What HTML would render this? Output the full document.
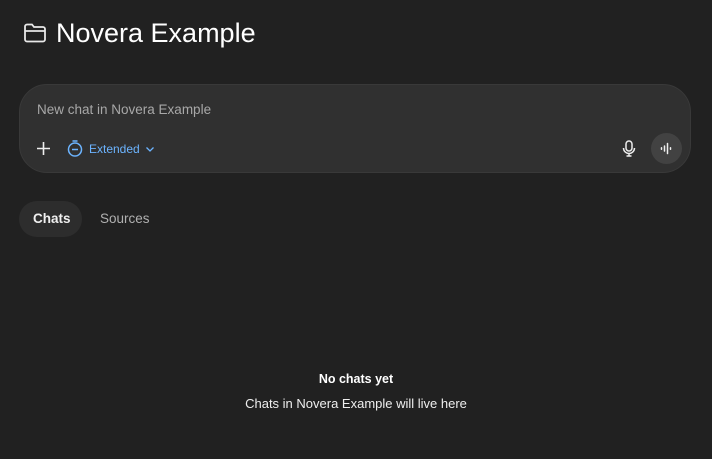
<!DOCTYPE html>
<html><head><style>
body{margin:0;width:712px;height:459px;background:#212121;font-family:"Liberation Sans",sans-serif;color:#fff;position:relative;overflow:hidden}
.a{position:absolute}
</style></head><body>
<svg class="a" style="left:23px;top:22px" width="24" height="22" viewBox="0 0 24 22" fill="none" stroke="#e8e8e8" stroke-width="1.8"><path d="M2 4.5a2 2 0 0 1 2-2h5l2 2.5h9a2 2 0 0 1 2 2v10.5a2 2 0 0 1-2 2H4a2 2 0 0 1-2-2z"/><path d="M2 9h20"/></svg>
<div class="a" style="left:56px;top:16px;font-size:27px;line-height:34px">Novera Example</div>
<div class="a" style="left:19px;top:84px;width:670px;height:87px;background:#303030;border:1px solid #393939;border-radius:28px"></div>
<div class="a" style="left:37px;top:102px;font-size:13.5px;color:#a8a8a8">New chat in Novera Example</div>
<svg class="a" style="left:36px;top:141px" width="15" height="15" stroke="#eee" stroke-width="1.6"><path d="M7.5 1v13M1 7.5h13"/></svg>
<svg class="a" style="left:66px;top:139px" width="18" height="19" viewBox="0 0 18 19" fill="none" stroke="#6cb4ff" stroke-width="1.5"><circle cx="9" cy="10.5" r="6.5"/><path d="M6.5 2h5M6 10.5h6"/></svg>
<div class="a" style="left:89px;top:142px;font-size:12px;color:#6cb4ff">Extended</div>
<svg class="a" style="left:145px;top:145px" width="10" height="8" fill="none" stroke="#6cb4ff" stroke-width="1.3"><path d="M1.5 2.5l3.5 3.5 3.5-3.5"/></svg>
<svg class="a" style="left:622px;top:140px" width="14" height="17" viewBox="0 0 14 17" fill="none" stroke="#eee" stroke-width="1.5"><rect x="4" y="1" width="6" height="10" rx="3"/><path d="M1.5 8a5.5 5.5 0 0 0 11 0M7 13.5v2.5M4.5 16h5"/></svg>
<div class="a" style="left:651px;top:133px;width:31px;height:31px;border-radius:50%;background:#424242"></div>
<svg class="a" style="left:659px;top:141px" width="15" height="15" stroke="#eee" stroke-width="1.5" stroke-linecap="round"><path d="M2.5 6.8v1.4M5.5 5v5M8.5 2.5v10M11.5 6.8v1.4"/></svg>
<div class="a" style="left:19px;top:201px;width:63px;height:36px;border-radius:18px;background:#2d2d2d"></div>
<div class="a" style="left:33px;top:211px;font-size:13.5px;font-weight:bold;color:#f0f0f0">Chats</div>
<div class="a" style="left:100px;top:211px;font-size:13.5px;color:#b0b0b0">Sources</div>
<div class="a" style="left:0;width:712px;top:372px;text-align:center;font-size:12.5px;font-weight:bold">No chats yet</div>
<div class="a" style="left:0;width:712px;top:396px;text-align:center;font-size:13px;color:#eee">Chats in Novera Example will live here</div>
</body></html>
